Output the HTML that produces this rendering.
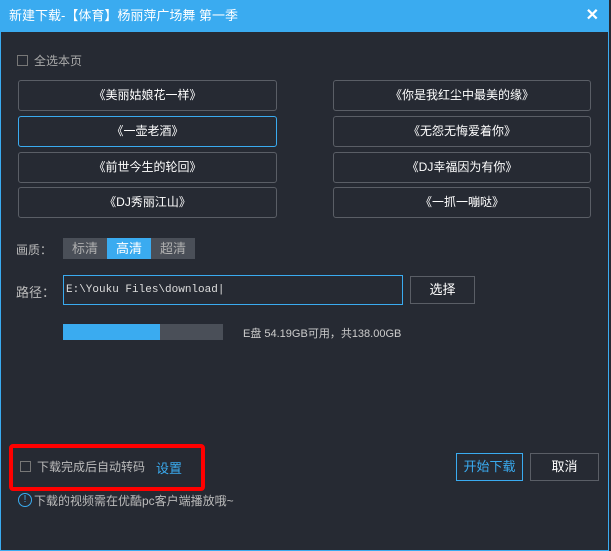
<!DOCTYPE html>
<html><head><meta charset="utf-8"><style>
*{margin:0;padding:0;box-sizing:border-box}
body{width:611px;height:551px;background:#262a33;font-family:"Liberation Sans","Noto Sans CJK SC",sans-serif;font-size:12px;color:#c8c8c8;position:relative;overflow:hidden}
.win{position:absolute;left:0;top:0;width:609px;height:551px;border:1px solid #3aabf0;border-top:none}
.title{position:absolute;left:0;top:0;width:609px;height:32px;background:#3aabf0;color:#fff;font-size:13px;line-height:32px;padding-left:9px}
.x{position:absolute;right:10px;top:0;font-size:16px;font-weight:bold}
.a{position:absolute}
.btn{position:absolute;border:1px solid #5a5e66;border-radius:3px;color:#fff;text-align:center;line-height:28px;font-size:12px}
.cb{position:absolute;width:11px;height:11px;border:1px solid #777}
.q{position:absolute;top:238px;width:44px;height:21px;background:#4a4f58;color:#b0b0b0;text-align:center;line-height:21px;font-size:13px}
</style></head><body>
<div class="win"></div>
<div class="title">新建下载-【体育】杨丽萍广场舞 第一季<span class="x">✕</span></div>
<div class="cb" style="left:17px;top:55px"></div><div class="a" style="left:34px;top:52px;color:#aaa">全选本页</div>
<div class="btn" style="left:18px;top:80px;width:259px;height:31px">《美丽姑娘花一样》</div>
<div class="btn" style="left:333px;top:80px;width:258px;height:31px">《你是我红尘中最美的缘》</div>
<div class="btn" style="left:18px;top:116px;width:259px;height:31px;border-color:#3aabf0">《一壶老酒》</div>
<div class="btn" style="left:333px;top:116px;width:258px;height:31px">《无怨无悔爱着你》</div>
<div class="btn" style="left:18px;top:152px;width:259px;height:31px">《前世今生的轮回》</div>
<div class="btn" style="left:333px;top:152px;width:258px;height:31px">《DJ幸福因为有你》</div>
<div class="btn" style="left:18px;top:187px;width:259px;height:31px">《DJ秀丽江山》</div>
<div class="btn" style="left:333px;top:187px;width:258px;height:31px">《一抓一嘣哒》</div>
<div class="a" style="left:16px;top:241px;color:#bbb">画质：</div>
<div class="q" style="left:63px">标清</div><div class="q" style="left:107px;background:#3aabf0;color:#fff">高清</div><div class="q" style="left:151px">超清</div>
<div class="a" style="left:16px;top:282px;color:#bbb;font-size:13px">路径：</div>
<div class="a" style="left:63px;top:275px;width:340px;height:30px;border:1px solid #3aabf0;color:#ddd;font-family:'Liberation Mono',monospace;font-size:11px;line-height:28px;padding-left:2px">E:\Youku Files\download|</div>
<div class="a" style="left:410px;top:276px;width:65px;height:28px;border:1px solid #5a5e66;color:#fff;text-align:center;line-height:26px;font-size:13px">选择</div>
<div class="a" style="left:63px;top:324px;width:160px;height:16px;background:#4a4f58"><div style="width:97px;height:16px;background:#3aabf0"></div></div>
<div class="a" style="left:243px;top:325px;color:#ccc;font-size:11px">E盘 54.19GB可用，共138.00GB</div>
<div class="a" style="left:9px;top:444px;width:196px;height:47px;border:4px solid #f00;border-radius:4px"></div>
<div class="cb" style="left:20px;top:461px"></div>
<div class="a" style="left:37px;top:458px;color:#bbb">下载完成后自动转码</div>
<div class="a" style="left:156px;top:458px;color:#3aabf0;font-size:13px">设置</div>
<div class="a" style="left:18px;top:493px;width:14px;height:14px;border:1px solid #3aabf0;border-radius:50%;color:#3aabf0;font-size:10px;text-align:center;line-height:12px">!</div>
<div class="a" style="left:34px;top:492px;color:#bbb">下载的视频需在优酷pc客户端播放哦~</div>
<div class="a" style="left:456px;top:453px;width:67px;height:28px;border:1px solid #3aabf0;color:#3aabf0;text-align:center;line-height:26px;font-size:13px">开始下载</div>
<div class="a" style="left:530px;top:453px;width:69px;height:28px;border:1px solid #5a5e66;color:#fff;text-align:center;line-height:26px;font-size:13px">取消</div>
</body></html>
